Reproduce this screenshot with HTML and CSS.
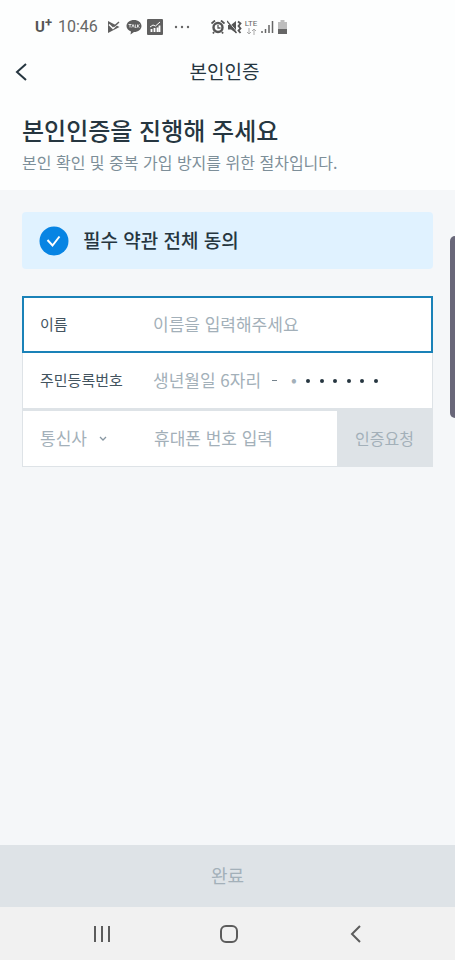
FILE: index.html
```html
<!DOCTYPE html>
<html lang="ko">
<head>
<meta charset="utf-8">
<meta name="viewport" content="width=device-width, initial-scale=1">
<title>본인인증</title>
<link rel="stylesheet" href="styles.css">
</head>
<body>
<div class="screen">
  <div class="status">
    <span class="carrier">U<sup>+</sup></span>
    <span class="time">10:46</span>
    <svg class="icon-play" width="14" height="14" viewBox="0 0 14 14"><path d="M1 1 12.500 7 1 13Z" fill="#606060"/><path d="m2 4.500 4 4 7-7" fill="none" stroke="#fdfefe" stroke-width="1.500"/><path d="m6 5 1.500 1L12 2" fill="none" stroke="#606060" stroke-width="1.500"/></svg>
    <svg class="icon-talk" width="16" height="16" viewBox="0 0 16 16"><path d="M8 1c4.200 0 7.500 2.600 7.500 6S12.200 13 8 13l-3.500 2.500.5-3C2.300 11.500.5 9.500.5 7 .5 3.600 3.800 1 8 1Z" fill="#5c5c5c"/><path d="M2.500 5.500h3M4 5.500v3M5.800 8.500 7 5.500l1.200 3M9.300 5.500v3h1.200M11.500 5.500v3M13.500 5.500l-2 1.500 2 1.500" fill="none" stroke="#fff" stroke-width=".8"/></svg>
    <svg class="icon-chart" width="16" height="16" viewBox="0 0 16 16"><rect width="16" height="16" rx="1" fill="#606060"/><path d="M4.500 13v-3M7.500 13V9M10.500 13V8.500M12.500 13V6.500" stroke="#fff" stroke-width="1.800"/><path d="m3 8 3-2 2.500 1L13 3" fill="none" stroke="#fff" stroke-width="1"/></svg>
    <svg class="icon-more" width="16" height="16" viewBox="0 0 16 16" fill="#666"><circle cx="2" cy="8" r="1.200"/><circle cx="8" cy="8" r="1.200"/><circle cx="14" cy="8" r="1.200"/></svg>
    <svg class="icon-alarm" width="14" height="14" viewBox="0 0 14 14" fill="none" stroke="#555"><path d="m.5 3.500 3.500-3M13.500 3.500l-3.500-3M3 12l-1 1.500M11 12l1 1.500" stroke-width="1.800"/><circle cx="7" cy="7.500" r="4.500" stroke-width="2.400"/><path d="M7 5v3h2.500" stroke-width="1.300"/></svg>
    <svg class="icon-mute" width="15" height="14" viewBox="0 0 15 14"><path d="M1 5h3l5-4v12L4 9.500H1Z" fill="#555"/><path d="m1 1 9 11" stroke="#fdfefe" stroke-width="1"/><path d="m0 1 9.500 12" stroke="#555" stroke-width="1.300"/><path d="m11 1.500 2.500 2L11.500 6l2 2.500-2 2 2 2.500" fill="none" stroke="#555" stroke-width="1.800"/></svg>
    <span class="lte">LTE<svg width="12" height="7" viewBox="0 0 12 7" fill="none" stroke="#aaa"><path d="M4 0v6M2 4l2 2 2-2M9 7V1M7 3l2-2 2 2"/></svg></span>
    <svg class="icon-signal" width="13" height="14" viewBox="0 0 13 14" stroke="#666" stroke-width="1.500"><path d="M1 13v-2M4.500 13V9M8 13V5M11.500 13V1"/></svg>
    <svg class="icon-battery" width="9" height="14" viewBox="0 0 9 14"><path d="M0 2h2.500V0h4v2H9v7H0Z" fill="#bdbdbd"/><path d="M0 9h9v5H0Z" fill="#666"/></svg>
  </div>

  <header class="topbar">
    <button class="back" type="button" aria-label="뒤로"><svg width="12" height="20" viewBox="0 0 12 20"><path d="m11 2-9 8 9 8" fill="none" stroke="#263640" stroke-width="2"/></svg></button>
    <h1>본인인증</h1>
  </header>

  <section class="intro">
    <h2>본인인증을 진행해 주세요</h2>
    <p>본인 확인 및 중복 가입 방지를 위한 절차입니다.</p>
  </section>

  <main class="content">
    <label class="agree">
      <input type="checkbox" checked>
      <svg class="tick" width="30" height="30" viewBox="0 0 30 30"><circle cx="15" cy="15" r="14.500" fill="#0784e3"/><path d="m8.500 14 5 5.500 7-9" fill="none" stroke="#fff" stroke-width="2"/></svg>
      <span>필수 약관 전체 동의</span>
    </label>

    <form class="fields">
      <div class="row row-active">
        <label for="name">이름</label>
        <input id="name" type="text" placeholder="이름을 입력해주세요">
      </div>
      <div class="row row-id">
        <label for="birth">주민등록번호</label>
        <input id="birth" class="birth" type="text" placeholder="생년월일 6자리">
        <span class="dash"></span>
        <input class="digit" type="text" maxlength="1" placeholder="•" aria-label="주민등록번호 뒷자리">
        <span class="dots"><i></i><i></i><i></i><i></i><i></i><i></i></span>
      </div>
      <div class="row row-phone">
        <div class="telecom">
          <select aria-label="통신사"><option>통신사</option></select>
          <svg width="8" height="6" viewBox="0 0 8 6"><path d="m1 1 3 3 3-3" fill="none" stroke="#8796a1" stroke-width="1.300"/></svg>
        </div>
        <input type="tel" placeholder="휴대폰 번호 입력" aria-label="휴대폰 번호">
        <button type="button">인증요청</button>
      </div>
    </form>
    <span class="edge-handle"></span>
  </main>

  <button class="submit" type="button">완료</button>

  <nav class="navbar">
    <button type="button" aria-label="최근 앱"><svg width="18" height="20" viewBox="0 0 18 20"><path d="M2 2v16M9 2v16M16 2v16" stroke="#5c5c5c" stroke-width="2"/></svg></button>
    <button type="button" aria-label="홈"><svg width="20" height="20" viewBox="0 0 20 20"><rect x="2" y="2" width="16" height="16" rx="5" fill="none" stroke="#5c5c5c" stroke-width="2"/></svg></button>
    <button type="button" aria-label="뒤로 가기"><svg width="12" height="20" viewBox="0 0 12 20"><path d="m10 2-8 8 8 8" fill="none" stroke="#5c5c5c" stroke-width="2"/></svg></button>
  </nav>
</div>
</body>
</html>
```
FILE: styles.css
```css
* { box-sizing: border-box; }

body {
  margin: 0;
  background: #fdfefe;
  color: #263640;
  font-family: "Noto Sans CJK KR", sans-serif;
}

button, input, select {
  margin: 0;
  padding: 0;
  border: 0;
  border-radius: 0;
  background: none;
  font: inherit;
  outline: 0;
}

svg { display: block; flex: none; }
h1, h2, p { margin: 0; }

.screen {
  display: flex;
  flex-direction: column;
  min-height: 100vh;
}

/* Status bar */
.status {
  display: flex;
  align-items: center;
  height: 54px;
  padding-left: 35px;
  color: #666;
  font-family: Roboto, sans-serif;
}

.carrier { font-size: 15px; font-weight: 700; line-height: 20px; color: #555; }
.carrier sup { font-size: 13px; line-height: 0; vertical-align: 5px; }
.time { margin-left: 6px; font-size: 16px; line-height: 20px; }
.icon-play { margin-left: 9px; }
.icon-talk { margin-left: 5px; }
.icon-chart { margin-left: 5px; }
.icon-more { margin-left: 11px; }
.icon-alarm { margin-left: 21px; }
.icon-mute { margin-left: 2px; }
.icon-signal { margin-left: 4px; }
.icon-battery { margin-left: 4px; }

.lte {
  display: flex;
  flex-direction: column;
  align-items: center;
  margin-left: 3px;
  font-size: 8px;
  line-height: 8px;
}

/* Header */
.topbar {
  display: grid;
  grid-template-columns: 48px 1fr 54px;
  align-items: center;
  height: 36px;
}

.back { padding-left: 15px; }
.topbar h1 {
  padding-bottom: 2px;
  font-size: 19px;
  font-weight: 400;
  line-height: 28px;
  text-align: center;
}

.intro { padding: 22px 22px 14px; }
.intro h2 { font-size: 24px; font-weight: 500; line-height: 36px; }
.intro p { font-size: 16px; line-height: 28px; color: #7d8f99; }

/* Form area */
.content {
  position: relative;
  flex: 1;
  padding: 22px 22px 24px;
  background: #f5f7f9;
}

.agree {
  display: flex;
  align-items: center;
  gap: 14px;
  height: 57px;
  padding-left: 17px;
  border-radius: 4px;
  background: #e0f2ff;
}

.agree span {
  padding-bottom: 2px;
  font-size: 19px;
  font-weight: 500;
  line-height: 28px;
}
.agree input { position: absolute; opacity: 0; }

.fields { margin-top: 27px; }

.row {
  display: flex;
  align-items: center;
  height: 57px;
  padding-left: 17px;
  border: 1px solid #dee3e7;
  background: #fff;
  font-size: 17px;
}

.row label {
  flex: none;
  width: 113px;
  padding-bottom: 2px;
  font-size: 15px;
  color: #43545f;
}

.row input { min-width: 0; height: 30px; padding-bottom: 2px; color: #263640; }
.row input::placeholder { color: #a3b0b9; opacity: 1; }
.row > input { flex: 1; }

.row-active { padding-left: 16px; border: 2px solid #1a82b8; }
.row-id { border-top: 0; border-bottom-width: 2px; }
.row-id .birth { flex: none; width: 119px; }
.dash { width: 5px; height: 1px; background: #75838d; }
.row-id .digit { flex: none; width: 10px; margin-left: 14px; padding-bottom: 4px; }
.dots { display: flex; justify-content: space-between; width: 72px; margin-left: 5px; }
.dots i { width: 4px; height: 4px; border-radius: 50%; background: #263640; }

.telecom { display: flex; align-items: center; gap: 12px; width: 114px; color: #a3b0b9; }
.telecom select { padding-bottom: 2px; appearance: none; color: inherit; }
.row-phone button {
  align-self: stretch;
  flex: none;
  width: 95px;
  padding-bottom: 2px;
  background: #dee3e7;
  color: #a3b0b9;
  font-size: 16px;
}

.edge-handle {
  position: absolute;
  top: 46px;
  right: 0;
  width: 5px;
  height: 182px;
  border-radius: 5px 0 0 5px;
  background: #696779;
}

/* Bottom actions */
.submit {
  height: 62px;
  padding-bottom: 2px;
  background: #dee3e7;
  color: #a3b0b9;
  font-size: 18px;
}

.navbar {
  display: flex;
  align-items: center;
  justify-content: space-around;
  height: 53px;
  padding: 0 35px 0 38px;
  background: #f1f1f1;
}

.navbar button { display: grid; place-items: center; width: 48px; height: 48px; }
```
